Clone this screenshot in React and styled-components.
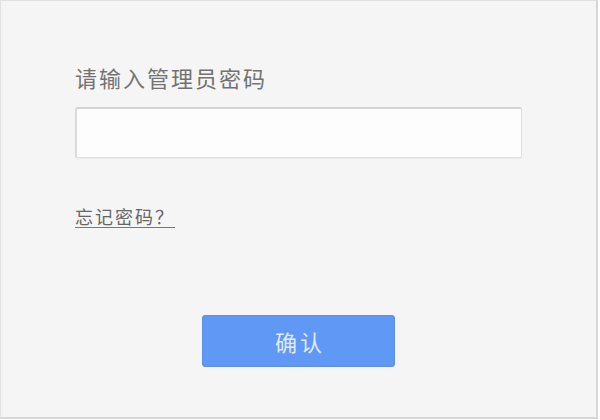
import React, { useState } from "react";
import styled, { createGlobalStyle } from "styled-components";

const GlobalStyle = createGlobalStyle`
  body {
    margin: 0;
    background: #ffffff;
    font-family: "Noto Sans CJK SC", "Noto Sans", sans-serif;
  }
`;

const Panel = styled.div`
  box-sizing: border-box;
  width: 598px;
  height: 419px;
  margin: 0;
  background: #f5f5f5;
  border: 1px solid #e2e2e2;
  border-right: 2px solid #d6d6d6;
  border-bottom: 2px solid #d6d6d6;
  display: flex;
  flex-direction: column;
`;

const Form = styled.div`
  padding: 63px 74px 0 74px;
  display: flex;
  flex-direction: column;
  align-items: flex-start;
`;

const Label = styled.div`
  font-size: 22px;
  line-height: 26px;
  color: #727272;
  letter-spacing: 2px;
`;

const Input = styled.input`
  box-sizing: border-box;
  margin-top: 17px;
  width: 447px;
  height: 51px;
  background: #fdfdfd;
  border: 1px solid #dedede;
  border-top: 2px solid #d4d4d4;
  border-left: 2px solid #dadada;
  border-radius: 2px;
  outline: none;
  padding: 0 12px;
  font-size: 18px;
  box-shadow: 0 1px 1px rgba(0, 0, 0, 0.04);
`;

const Link = styled.a`
  margin-top: 47px;
  font-size: 18px;
  line-height: 22px;
  letter-spacing: 2px;
  color: #666666;
  text-decoration: underline;
  text-underline-offset: 3px;
  text-decoration-color: #777777;
  cursor: pointer;
`;

const ButtonRow = styled.div`
  display: flex;
  justify-content: center;
  margin-top: 88px;
`;

const Button = styled.button`
  width: 193px;
  height: 52px;
  border: 1px solid #5a8ee8;
  border-radius: 3px;
  background: #6098f6;
  color: #e2eafa;
  font-family: "Noto Sans CJK SC", "Noto Sans", sans-serif;
  font-size: 22px;
  letter-spacing: 3px;
  padding: 0 0 0 3px;
  cursor: pointer;
`;

export default function App() {
  const [password, setPassword] = useState("");

  return (
    <>
      <GlobalStyle />
      <Panel>
        <Form>
          <Label>请输入管理员密码</Label>
          <Input
            type="password"
            value={password}
            onChange={(e) => setPassword(e.target.value)}
          />
          <Link>忘记密码？</Link>
        </Form>
        <ButtonRow>
          <Button>确认</Button>
        </ButtonRow>
      </Panel>
    </>
  );
}
